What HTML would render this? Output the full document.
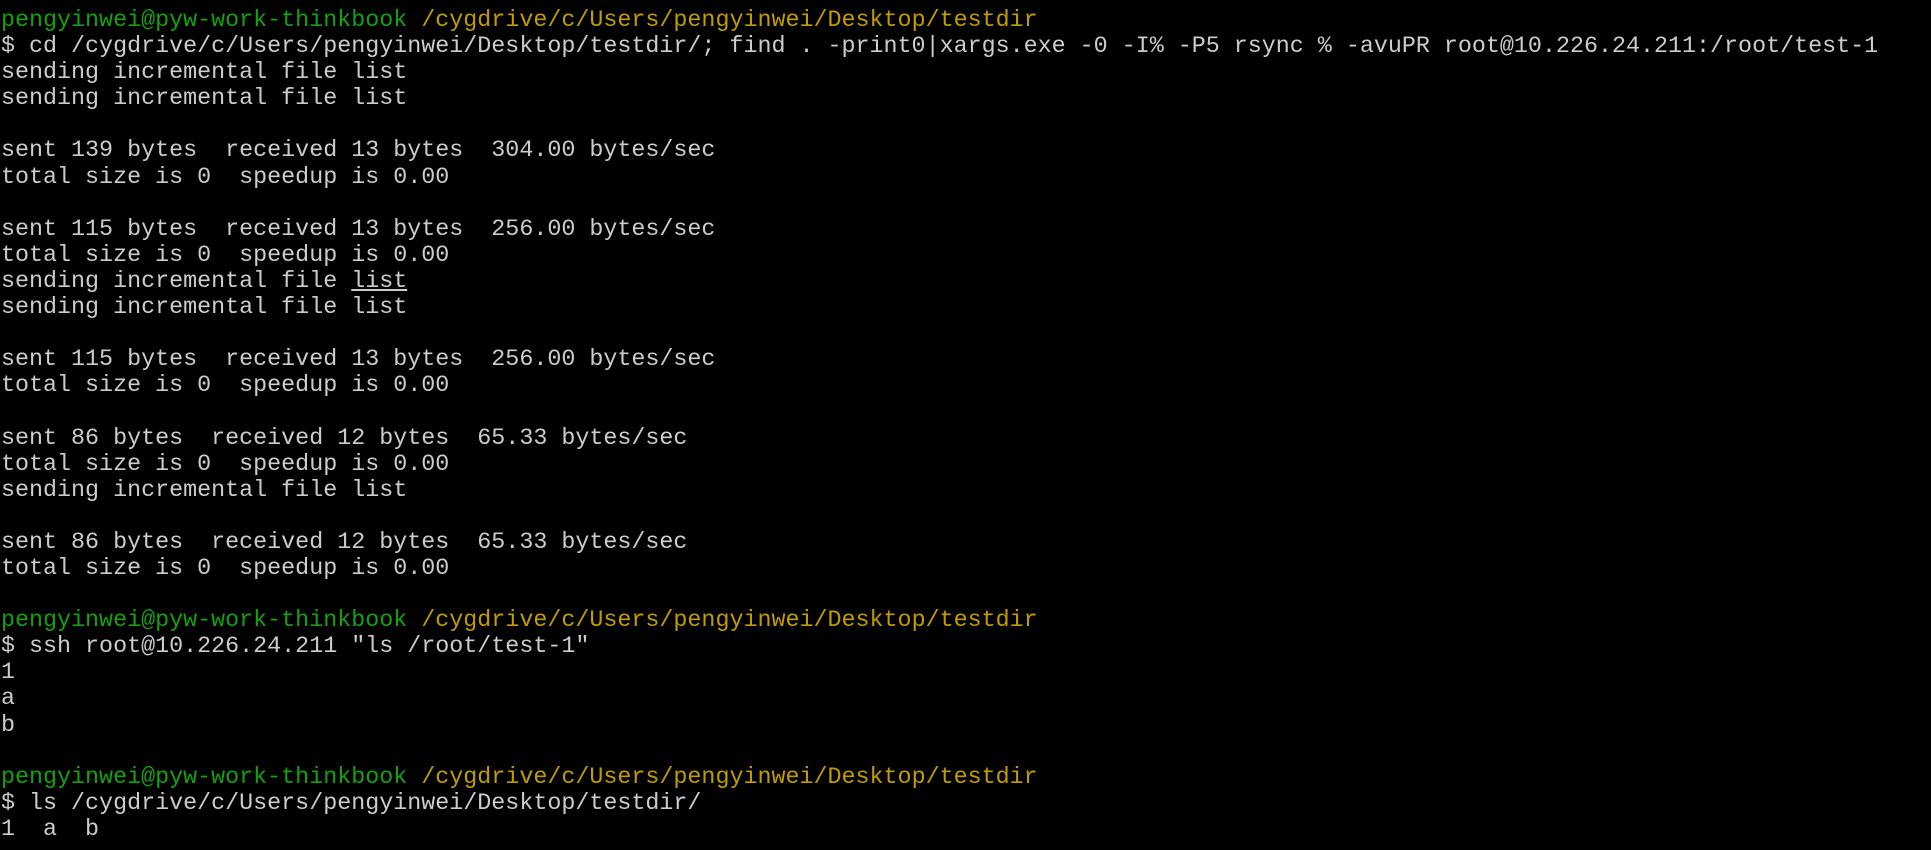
<!DOCTYPE html>
<html><head><meta charset="utf-8"><style>
html,body{margin:0;padding:0;background:#000;}
body{width:1931px;height:850px;overflow:hidden;}
pre{margin:0;padding:8px 0 0 1px;font-family:"Liberation Mono",monospace;font-size:23.35px;line-height:26.1px;color:#cccccc;white-space:pre;}
.g{color:#13a10e}.y{color:#c19c00}.u{text-decoration:underline}
</style></head><body><pre><span class="g">pengyinwei@pyw-work-thinkbook</span> <span class="y">/cygdrive/c/Users/pengyinwei/Desktop/testdir</span>
$ cd /cygdrive/c/Users/pengyinwei/Desktop/testdir/; find . -print0|xargs.exe -0 -I% -P5 rsync % -avuPR root@10.226.24.211:/root/test-1
sending incremental file list
sending incremental file list

sent 139 bytes  received 13 bytes  304.00 bytes/sec
total size is 0  speedup is 0.00

sent 115 bytes  received 13 bytes  256.00 bytes/sec
total size is 0  speedup is 0.00
sending incremental file <span class="u">list</span>
sending incremental file list

sent 115 bytes  received 13 bytes  256.00 bytes/sec
total size is 0  speedup is 0.00

sent 86 bytes  received 12 bytes  65.33 bytes/sec
total size is 0  speedup is 0.00
sending incremental file list

sent 86 bytes  received 12 bytes  65.33 bytes/sec
total size is 0  speedup is 0.00

<span class="g">pengyinwei@pyw-work-thinkbook</span> <span class="y">/cygdrive/c/Users/pengyinwei/Desktop/testdir</span>
$ ssh root@10.226.24.211 "ls /root/test-1"
1
a
b

<span class="g">pengyinwei@pyw-work-thinkbook</span> <span class="y">/cygdrive/c/Users/pengyinwei/Desktop/testdir</span>
$ ls /cygdrive/c/Users/pengyinwei/Desktop/testdir/
1  a  b</pre></body></html>
